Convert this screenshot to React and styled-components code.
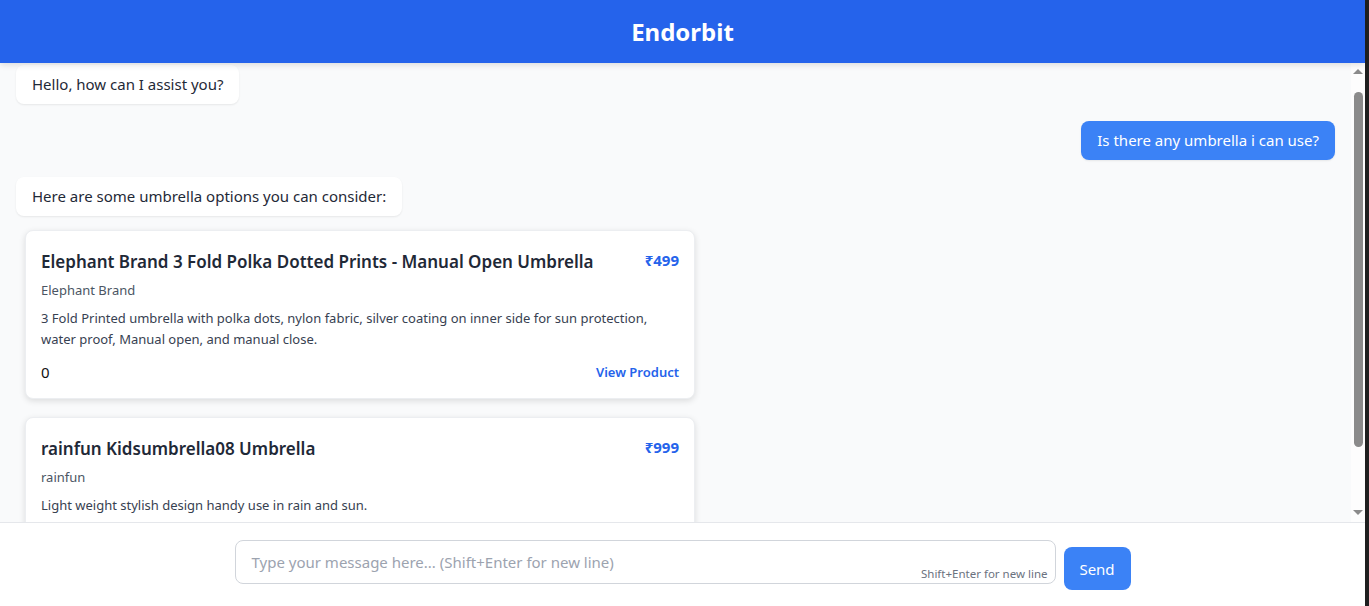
import React from "react";
import styled, { createGlobalStyle } from "styled-components";

const GlobalStyle = createGlobalStyle`
  html, body {
    margin: 0;
    padding: 0;
    height: 100%;
  }
  body {
    font-family: "Noto Sans", "Open Sans", sans-serif;
    color: #1f2937;
  }
  #root {
    height: 100%;
  }
  * {
    box-sizing: border-box;
  }
`;

const products = [
  {
    id: 1,
    title: "Elephant Brand 3 Fold Polka Dotted Prints - Manual Open Umbrella",
    brand: "Elephant Brand",
    price: "₹499",
    description:
      "3 Fold Printed umbrella with polka dots, nylon fabric, silver coating on inner side for sun protection, water proof, Manual open, and manual close.",
    rating: 0,
  },
  {
    id: 2,
    title: "rainfun Kidsumbrella08 Umbrella",
    brand: "rainfun",
    price: "₹999",
    description: "Light weight stylish design handy use in rain and sun.",
    rating: 0,
  },
];

function ProductCard({ product }) {
  return (
    <Card>
      <CardHead>
        <CardTitle>{product.title}</CardTitle>
        <Price>{product.price}</Price>
      </CardHead>
      <Brand>{product.brand}</Brand>
      <Description>{product.description}</Description>
      <CardFooter>
        <Rating>{product.rating}</Rating>
        <ViewLink href="#">View Product</ViewLink>
      </CardFooter>
    </Card>
  );
}

export default function App() {
  return (
    <Page>
      <GlobalStyle />
      <Header>
        <h1>Endorbit</h1>
      </Header>
      <ChatArea>
        <Messages>
          <Bubble>Hello, how can I assist you?</Bubble>
          <Bubble $user>Is there any umbrella i can use?</Bubble>
          <BotGroup>
            <Bubble>Here are some umbrella options you can consider:</Bubble>
            <ProductList>
              {products.map((p) => (
                <ProductCard key={p.id} product={p} />
              ))}
            </ProductList>
          </BotGroup>
        </Messages>
        <ScrollBar>
          <Arrow $dir="up" />
          <Thumb style={{ height: 355 }} />
          <Arrow $dir="down" />
        </ScrollBar>
      </ChatArea>
      <Footer>
        <InputRow>
          <InputWrap>
            <TextArea placeholder="Type your message here... (Shift+Enter for new line)" rows={1} />
            <Hint>Shift+Enter for new line</Hint>
          </InputWrap>
          <SendButton>Send</SendButton>
        </InputRow>
      </Footer>
    </Page>
  );
}

const Page = styled.div`
  display: flex;
  flex-direction: column;
  height: 100vh;
  background: #f9fafb;
  border-right: 4px solid #1f1f1f;
`;

const Header = styled.header`
  flex: 0 0 63px;
  background: #2563eb;
  display: flex;
  align-items: center;
  justify-content: center;
  box-shadow: 0 2px 6px rgba(0, 0, 0, 0.12);
  position: relative;
  z-index: 2;

  h1 {
    margin: 0;
    color: #fff;
    font-size: 24px;
    font-weight: 700;
  }
`;

const ChatArea = styled.div`
  flex: 1;
  min-height: 0;
  display: flex;
`;

const Messages = styled.main`
  flex: 1;
  overflow: hidden;
  display: flex;
  flex-direction: column;
  gap: 17px;
  padding: 2px 16px 16px 16px;
`;

const ScrollBar = styled.div`
  flex: 0 0 14px;
  background: #fdfdfd;
  display: flex;
  flex-direction: column;
  align-items: center;
  padding-top: 6px;
`;

const Arrow = styled.span`
  width: 0;
  height: 0;
  border-left: 5px solid transparent;
  border-right: 5px solid transparent;
  ${(p) =>
    p.$dir === "up"
      ? "border-bottom: 5px solid #8b8b8b;"
      : "border-top: 5px solid #8b8b8b; margin-top: auto; margin-bottom: 7px;"}
`;

const Thumb = styled.span`
  width: 9px;
  margin-top: 18px;
  margin-left: 1px;
  border-radius: 5px;
  background: #8b8b8b;
`;

const Bubble = styled.div`
  align-self: ${(p) => (p.$user ? "flex-end" : "flex-start")};
  background: ${(p) => (p.$user ? "#3b82f6" : "#fff")};
  color: ${(p) => (p.$user ? "#fff" : "#1f2937")};
  font-size: 15px;
  line-height: 22px;
  padding: 8px 16px 9px;
  border-radius: 8px;
  box-shadow: 0 1px 2px rgba(0, 0, 0, 0.08);
  flex-shrink: 0;
`;

const BotGroup = styled.div`
  display: flex;
  flex-direction: column;
  gap: 14px;
  flex-shrink: 0;
`;

const ProductList = styled.div`
  display: flex;
  flex-direction: column;
  gap: 18px;
  margin-left: 9px;
  width: 670px;
`;

const Card = styled.div`
  background: #fff;
  border: 1px solid #eceef1;
  border-radius: 8px;
  box-shadow: 0 2px 6px rgba(0, 0, 0, 0.12);
  padding: 17px 15px 16px 15px;
`;

const CardHead = styled.div`
  display: flex;
  justify-content: space-between;
  align-items: flex-start;
  gap: 16px;
`;

const CardTitle = styled.h3`
  margin: 0;
  font-size: 17px;
  font-weight: 600;
  line-height: 28px;
  color: #1f2937;
`;

const Price = styled.span`
  color: #2563eb;
  font-weight: 700;
  font-size: 15px;
  line-height: 24px;
  white-space: nowrap;
`;

const Brand = styled.p`
  margin: 4px 0 0;
  font-size: 13px;
  line-height: 20px;
  color: #4b5563;
`;

const Description = styled.p`
  margin: 8px 0 0;
  font-size: 13px;
  line-height: 21px;
  color: #374151;
`;

const CardFooter = styled.div`
  display: flex;
  justify-content: space-between;
  align-items: center;
  margin-top: 12px;
`;

const Rating = styled.span`
  font-size: 15px;
  color: #111;
`;

const ViewLink = styled.a`
  color: #2563eb;
  font-size: 13px;
  font-weight: 600;
  text-decoration: none;
`;

const Footer = styled.footer`
  flex: 0 0 84px;
  background: #fff;
  border-top: 1px solid #e5e7eb;
  padding: 17px 16px 0;
`;

const InputRow = styled.div`
  max-width: 896px;
  margin: 0 auto;
  display: flex;
  align-items: flex-end;
  gap: 8px;
`;

const InputWrap = styled.div`
  position: relative;
  flex: 1;
  padding-bottom: 6px;
`;

const TextArea = styled.textarea`
  display: block;
  width: 100%;
  height: 44px;
  resize: none;
  border: 1px solid #d1d5db;
  border-radius: 8px;
  padding: 10px 16px;
  font-family: inherit;
  font-size: 15px;
  line-height: 22px;
  color: #1f2937;
  outline: none;

  &::placeholder {
    color: #9ca3af;
  }
`;

const Hint = styled.span`
  position: absolute;
  right: 8px;
  bottom: 9px;
  font-size: 11.5px;
  color: #6b7280;
`;

const SendButton = styled.button`
  flex: 0 0 67px;
  height: 43px;
  border: none;
  border-radius: 8px;
  background: #3b82f6;
  color: #fff;
  font-family: inherit;
  font-size: 15px;
  cursor: pointer;
`;
